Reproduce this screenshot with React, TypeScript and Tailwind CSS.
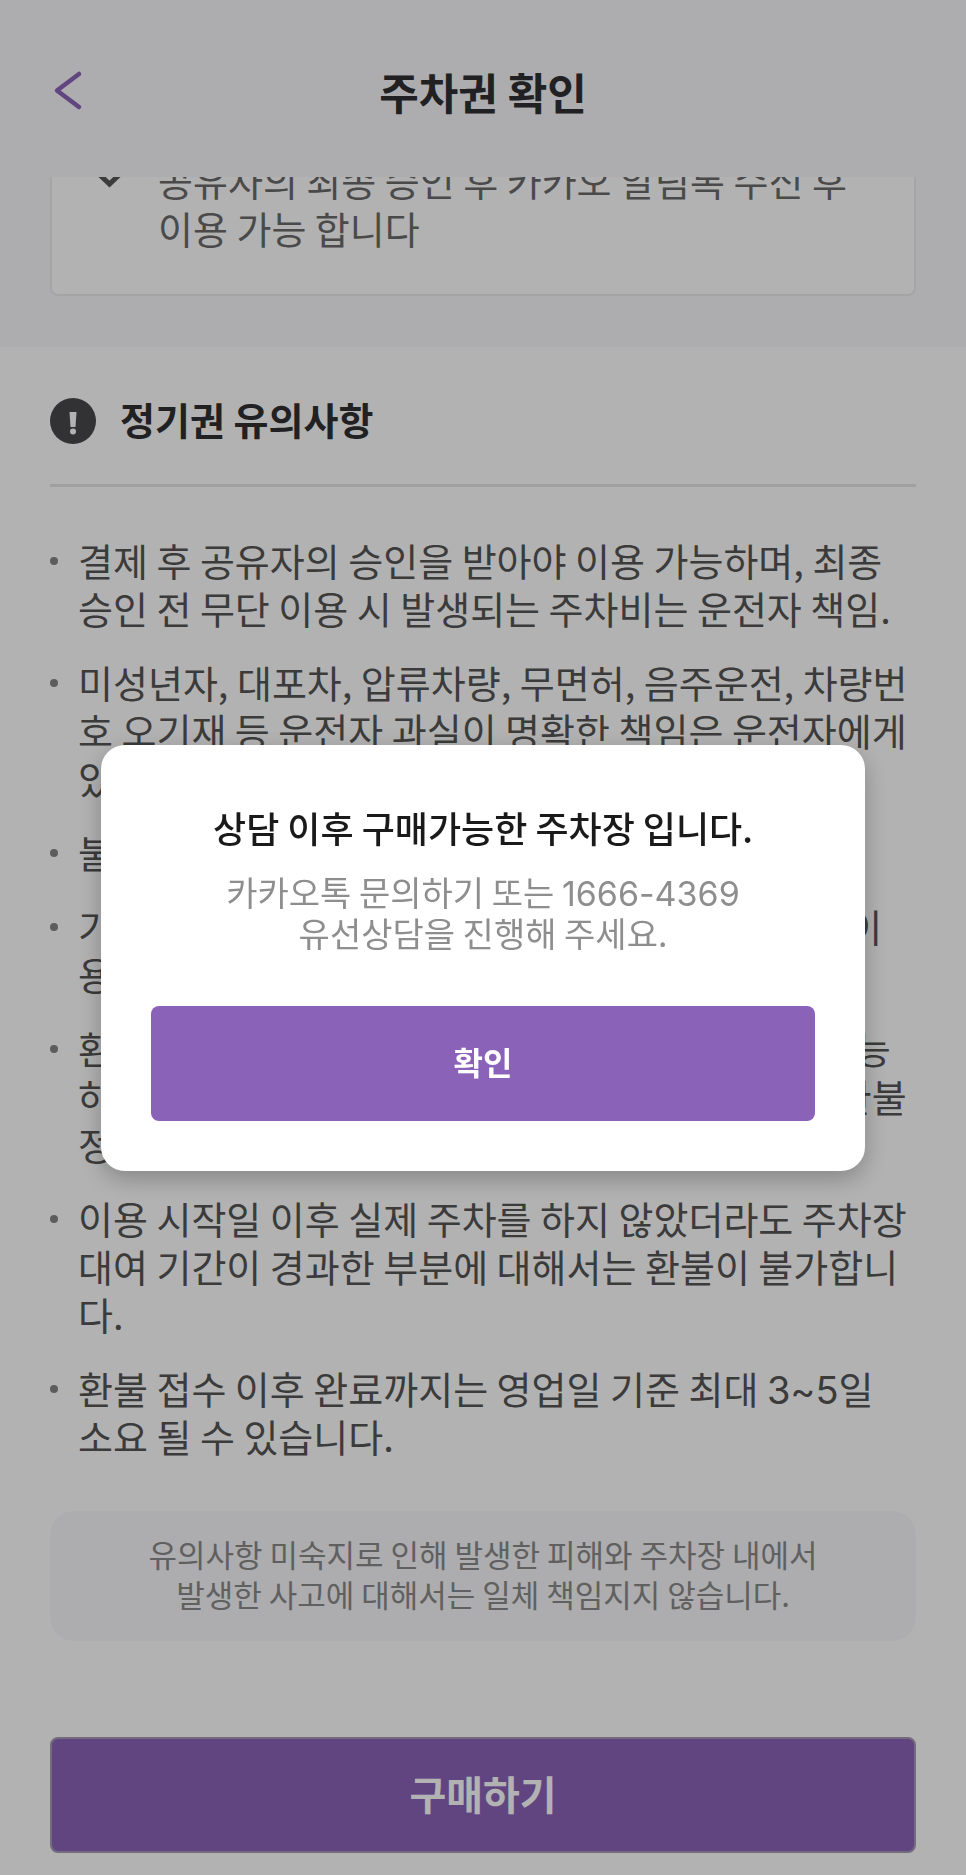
import * as React from "react";

const NOTICES = [
    ["결제 후 공유자의 승인을 받아야 이용 가능하며, 최종", "승인 전 무단 이용 시 발생되는 주차비는 운전자 책임."],
    ["미성년자, 대포차, 압류차량, 무면허, 음주운전, 차량번", "호 오기재 등 운전자 과실이 명확한 책임은 운전자에게", "있습니다."],
    ["불법 주차 시 견인될 수 있습니다."],
    ["기간 연장은 종료일 이전에 다시 결제하셔야 하며, 이", "용 중 변경은 불가합니다."],
    ["환불은 이용 시작일 전에 요청 하신 경우에, 전액 가능", "하며 이용 시작 이후에는 남은 기간만큼 계산되어 환불", "정책에 따릅니다."],
    ["이용 시작일 이후 실제 주차를 하지 않았더라도 주차장", "대여 기간이 경과한 부분에 대해서는 환불이 불가합니", "다."],
    ["환불 접수 이후 완료까지는 영업일 기준 최대 3~5일", "소요 될 수 있습니다."],
];

// digits are set in Inter, everything else in Noto
function withDigits(text: string) {
    return text.split(/(\d[\d~-]*)/).map((part, i) =>
        i % 2 === 1 ? (
            <span key={i} className="font-['Inter'] leading-none">
                {part}
            </span>
        ) : (
            part
        )
    );
}

function Header() {
    return (
        <header className="grid h-[177px] shrink-0 grid-cols-[1fr_auto_1fr] items-center bg-[#f8f8fb] px-[50px] pt-1">
            <button aria-label="뒤로" className="justify-self-start">
                <svg width="34" height="44" viewBox="0 0 34 44" fill="none">
                    <path d="M29 5 L7 21.5 L29 38" stroke="#8a63b9" strokeWidth="4.5" strokeLinecap="round" strokeLinejoin="round" />
                </svg>
            </button>
            <h1 className="text-[43px] font-bold leading-[60px] text-[#303033]">주차권 확인</h1>
        </header>
    );
}

function ApprovalCard() {
    return (
        <section className="overflow-hidden bg-[#f8f8fb] px-[50px] pb-[51px]">
            <div className="-mt-[23px] flex rounded-lg border-2 border-[#ececee] bg-white pb-[42px] pl-[43px] pr-6">
                <svg className="mr-8 shrink-0" width="31" height="36" viewBox="0 0 31 36" fill="none">
                    <path d="M5 19 L14.5 28 L24 19" stroke="#555" strokeWidth="5" strokeLinecap="round" />
                </svg>
                <p className="text-[38px] leading-[48px] text-[#6b6b6b]">
                    공유자의 최종 승인 후 카카오 알림톡 수신 후
                    <br />
                    이용 가능 합니다
                </p>
            </div>
        </section>
    );
}

function NoticeList() {
    return (
        <ul className="mt-[49px] space-y-[26px]">
            {NOTICES.map((lines) => (
                <li key={lines[0]} className="flex text-[38px] leading-[48px] text-[#555]">
                    <span className="mr-5 mt-[21px] size-2 shrink-0 rounded-full bg-[#858585]" />
                    <p>
                        {lines.map((line) => (
                            <span key={line} className="block whitespace-nowrap">
                                {withDigits(line)}
                            </span>
                        ))}
                    </p>
                </li>
            ))}
        </ul>
    );
}

function ConsultDialog({ onClose }: { onClose: () => void }) {
    return (
        <div className="fixed inset-0 flex items-center bg-black/30 px-[101px] pt-10">
            <div
                role="dialog"
                aria-labelledby="consult-title"
                className="w-full rounded-3xl bg-white p-[50px] text-center shadow-[0_8px_24px_rgba(0,0,0,0.25)]"
            >
                <h2 id="consult-title" className="text-[36px] font-medium leading-[64px] text-[#1a1a1a]">
                    상담 이후 구매가능한 주차장 입니다.
                </h2>
                <p className="mt-3 text-[34px] leading-[41px] text-[#8e8e8e]">
                    {withDigits("카카오톡 문의하기 또는 1666-4369")}
                    <br />
                    유선상담을 진행해 주세요.
                </p>
                <button
                    onClick={onClose}
                    className="mt-[53px] h-[115px] w-full rounded-lg bg-[#8a63b9] pb-1 text-[32px] font-bold text-white"
                >
                    확인
                </button>
            </div>
        </div>
    );
}

export default function App() {
    const [open, setOpen] = React.useState(true);

    return (
        <div className="flex min-h-screen flex-col bg-white font-['Noto_Sans_CJK_KR',sans-serif]">
            <Header />
            <ApprovalCard />

            <main className="px-[50px] pt-[50px]">
                <div className="flex items-center border-b-3 border-[#e6e6e6] pb-[39px]">
                    <svg className="mr-6 shrink-0" width="46" height="46" viewBox="0 0 46 46">
                        <circle cx="23" cy="23" r="23" fill="#48484b" />
                        <path d="M19.5 14 H26.5 L25.5 29 H20.5 Z" fill="#fff" />
                        <circle cx="23" cy="33.5" r="3" fill="#fff" />
                    </svg>
                    <h2 className="pb-1 text-[38px] font-bold leading-[44px] text-[#303033]">정기권 유의사항</h2>
                </div>

                <NoticeList />

                <p className="mt-[51px] rounded-3xl bg-[#f8f8fb] pb-[27px] pt-[23px] text-center text-[31px] leading-[40px] text-[#8a8a8a]">
                    유의사항 미숙지로 인해 발생한 피해와 주차장 내에서
                    <br />
                    발생한 사고에 대해서는 일체 책임지지 않습니다.
                </p>
            </main>

            <footer className="mt-auto px-[50px] pb-[22px]">
                <button
                    onClick={() => setOpen(true)}
                    className="h-[116px] w-full rounded-lg border-2 border-[#a79bb5] bg-[#8a63b9] pb-1 text-[40px] font-bold text-white"
                >
                    구매하기
                </button>
            </footer>

            {open && <ConsultDialog onClose={() => setOpen(false)} />}
        </div>
    );
}
